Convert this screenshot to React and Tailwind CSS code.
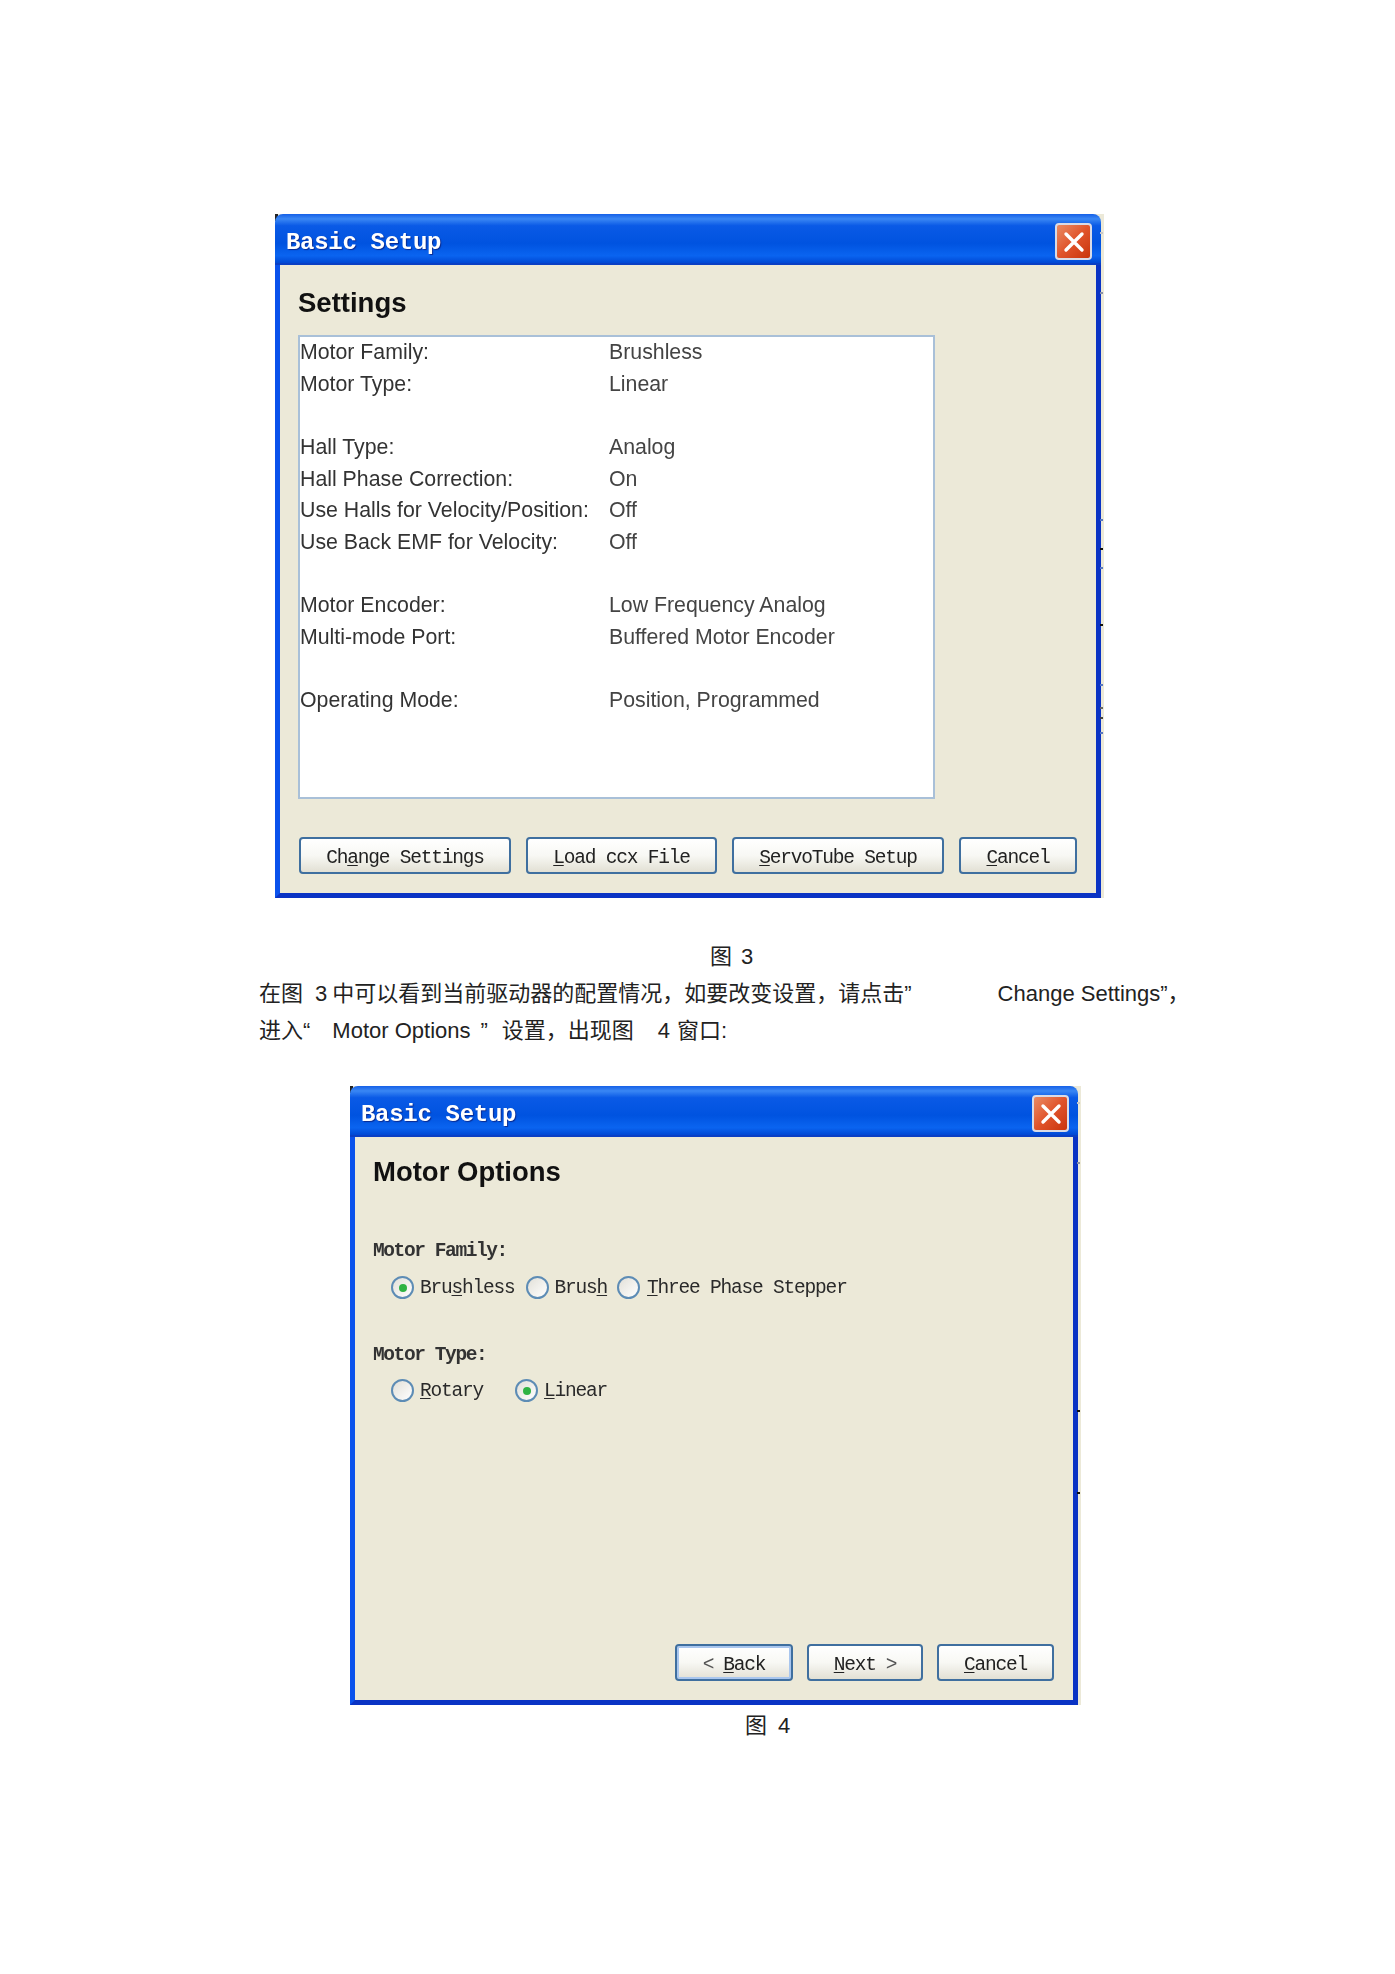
import React from "react";

const mono = "font-['Liberation_Mono',monospace]";
const bodyFont = "font-['Liberation_Sans','Noto_Sans_CJK_SC',sans-serif]";
const monoText = `${mono} text-[19.5px] tracking-[-1.2px] leading-none`;

const settings = [
  ["Motor Family:", "Brushless"],
  ["Motor Type:", "Linear"],
  null,
  ["Hall Type:", "Analog"],
  ["Hall Phase Correction:", "On"],
  ["Use Halls for Velocity/Position:", "Off"],
  ["Use Back EMF for Velocity:", "Off"],
  null,
  ["Motor Encoder:", "Low Frequency Analog"],
  ["Multi-mode Port:", "Buffered Motor Encoder"],
  null,
  ["Operating Mode:", "Position, Programmed"],
];

const CloseButton = () => (
  <div className="flex h-[37px] w-[37px] items-center justify-center rounded-[4px] border-2 border-[#d9dbe6] bg-gradient-to-br from-[#e98a62] via-[#e0532a] to-[#c93408]">
    <svg width="24" height="24" viewBox="0 0 24 24">
      <path d="M4 4 L20 20 M20 4 L4 20" stroke="#fff" strokeWidth="3.4" strokeLinecap="round" />
    </svg>
  </div>
);

const Window = ({ width, height, title, heading, headingTop, ticks, children }) => (
  <div className={`relative flex flex-col bg-[#ece9d8] blur-[0.5px] ${width} ${height}`}>
    {/* strip of the desktop left over at the screenshot's right edge */}
    <div className="absolute -right-[3px] bottom-0 top-0 w-[3px] bg-[#ece9d8]" />
    <div className="absolute left-0 top-0 h-[7px] w-[3px] bg-[#222]" />
    {ticks.map(([top, color]) => (
      <div key={top} style={{ top, backgroundColor: color }} className="absolute -right-[2px] z-10 h-[2px] w-[3px]" />
    ))}
    <div className="relative flex h-[51px] shrink-0 items-start justify-between rounded-t-[8px] border-b-2 border-[#0a3fc4] bg-[linear-gradient(180deg,#1560e8_0%,#3a87f4_10%,#0a5ae6_24%,#0053e0_60%,#0a64f0_85%,#0048d4_100%)] pl-[11px] pr-[9px] pt-[9px]">
      <span className={`${mono} -mt-[9px] whitespace-pre pt-[10px] text-[24px] font-bold leading-[38px] tracking-[-0.3px] text-white [text-shadow:1px_1px_1px_#0a2a90]`}>{title}</span>
      <CloseButton />
    </div>
    <div className="flex min-h-0 flex-1 flex-col border-x-[5px] border-b-[5px] border-l-[#0a52ec] border-r-[#0a33c4] border-b-[#0a33c4] pl-[18px]">
      <h2 className={`${bodyFont} ${headingTop} text-[27.5px] font-bold leading-[36px] text-[#111]`}>{heading}</h2>
      {children}
    </div>
  </div>
);

const XpButton = ({ className = "", children, focused }) => (
  <div
    className={`${monoText} flex h-[37px] items-center justify-center rounded-[4px] border-2 border-[#3f6f9f] bg-gradient-to-b from-white via-[#f8f8f4] to-[#e2e0d4] pt-[7px] text-[#222] ${focused ? "shadow-[inset_0_0_0_2px_#a9c6ee]" : ""} ${className}`}
  >
    {children}
  </div>
);

const U = ({ children }) => <span className="underline underline-offset-2">{children}</span>;

const Radio = ({ checked, className = "" }) => (
  <span className={`flex h-[23px] w-[23px] shrink-0 items-center justify-center rounded-full border-2 border-[#5d8cb5] bg-gradient-to-br from-[#e2e0d8] to-white ${className}`}>
    {checked && <span className="h-[8px] w-[8px] rounded-full bg-[#2fb344]" />}
  </span>
);

const RadioLabel = ({ className = "", children }) => (
  <span className={`${monoText} whitespace-pre pt-[3px] text-[#2a2a2a] ${className}`}>{children}</span>
);

const Label = ({ className = "", children }) => (
  <div className={`${mono} text-[19.5px] font-bold leading-[22px] tracking-[-1.4px] text-[#333] ${className}`}>{children}</div>
);

export default function App() {
  return (
    <div className={`${bodyFont} h-[1974px] w-[1395px] overflow-hidden bg-white pt-[214px] text-[#222]`}>
      <div className="ml-[275px]">
        <Window
          width="w-[826px]"
          height="h-[684px]"
          title="Basic Setup"
          heading="Settings"
          headingTop="mt-[20px]"
          ticks={[[18, "#c8c8c8"], [78, "#8a92a8"], [305, "#5a78c0"], [334, "#111"], [353, "#5a78c0"], [410, "#111"], [470, "#5a78c0"], [493, "#666"], [503, "#444"], [518, "#5a78c0"]]}
        >
          <div className="mt-[14px] h-[464px] w-[637px] border-2 border-[#a9c0d8] bg-white">
            {settings.map((row, i) =>
              row ? (
                <div key={i} className="flex h-[31.65px] items-center text-[21.3px] leading-none">
                  <span className="w-[309px] shrink-0 text-[#333]">{row[0]}</span>
                  <span className="text-[#444]">{row[1]}</span>
                </div>
              ) : (
                <div key={i} className="h-[31.65px]" />
              )
            )}
          </div>
          <div className="mt-[38px] flex gap-[15px] pl-[1px]">
            <XpButton className="w-[212px]">Ch<U>a</U>nge Settings</XpButton>
            <XpButton className="w-[191px]"><U>L</U>oad ccx File</XpButton>
            <XpButton className="w-[212px]"><U>S</U>ervoTube Setup</XpButton>
            <XpButton className="w-[118px]"><U>C</U>ancel</XpButton>
          </div>
        </Window>
      </div>

      <div className="ml-[710px] mt-[42px] flex h-[34px] items-center text-[22px] leading-none">
        <span className="w-[31px]">图</span>
        <span>3</span>
      </div>

      <div className="ml-[259px] mt-[1px] flex h-[37px] items-center whitespace-pre text-[22px] leading-none">
        <span>在图</span>
        <span className="ml-[12px]">3</span>
        <span className="ml-[5px]">中可以看到当前驱动器的配置情况，如要改变设置，请点击”</span>
        <span className="ml-[86px]">Change Settings”，</span>
      </div>
      <div className="ml-[259px] flex h-[37px] items-center whitespace-pre text-[22px] leading-none">
        <span>进入“</span>
        <span className="ml-[22px]">Motor Options</span>
        <span className="ml-[10px]">”</span>
        <span className="ml-[14px]">设置，出现图</span>
        <span className="ml-[24px]">4</span>
        <span className="ml-[7px]">窗口:</span>
      </div>

      <div className="ml-[350px] mt-[37px]">
        <Window
          width="w-[728px]"
          height="h-[619px]"
          title="Basic Setup"
          heading="Motor Options"
          headingTop="mt-[17px]"
          ticks={[[16, "#c8c8c8"], [76, "#8a92a8"], [324, "#111"], [406, "#111"]]}
        >
          <Label className="mt-[50px]">Motor Family:</Label>
          <div className="mt-[14px] flex h-[23px] items-center pl-[18px]">
            <Radio checked />
            <RadioLabel className="ml-[6px]">Bru<U>s</U>hless</RadioLabel>
            <Radio className="ml-[11px]" />
            <RadioLabel className="ml-[6px]">Brus<U>h</U></RadioLabel>
            <Radio className="ml-[10px]" />
            <RadioLabel className="ml-[7px]"><U>T</U>hree Phase Stepper</RadioLabel>
          </div>
          <Label className="mt-[45px]">Motor Type:</Label>
          <div className="mt-[13px] flex h-[23px] items-center pl-[18px]">
            <Radio />
            <RadioLabel className="ml-[6px]"><U>R</U>otary</RadioLabel>
            <Radio checked className="ml-[32px]" />
            <RadioLabel className="ml-[6px]"><U>L</U>inear</RadioLabel>
          </div>
          <div className="mb-[19px] mt-auto flex justify-end gap-[14px] pr-[19px]">
            <XpButton className="w-[118px] gap-[10px]" focused><span className="text-[#555]">&lt;</span><span><U>B</U>ack</span></XpButton>
            <XpButton className="w-[116px] gap-[10px]"><span><U>N</U>ext</span><span className="text-[#555]">&gt;</span></XpButton>
            <XpButton className="w-[117px]"><U>C</U>ancel</XpButton>
          </div>
        </Window>
      </div>

      <div className="ml-[745px] mt-[4px] flex h-[34px] items-center text-[22px] leading-none">
        <span className="w-[33px]">图</span>
        <span>4</span>
      </div>
    </div>
  );
}
